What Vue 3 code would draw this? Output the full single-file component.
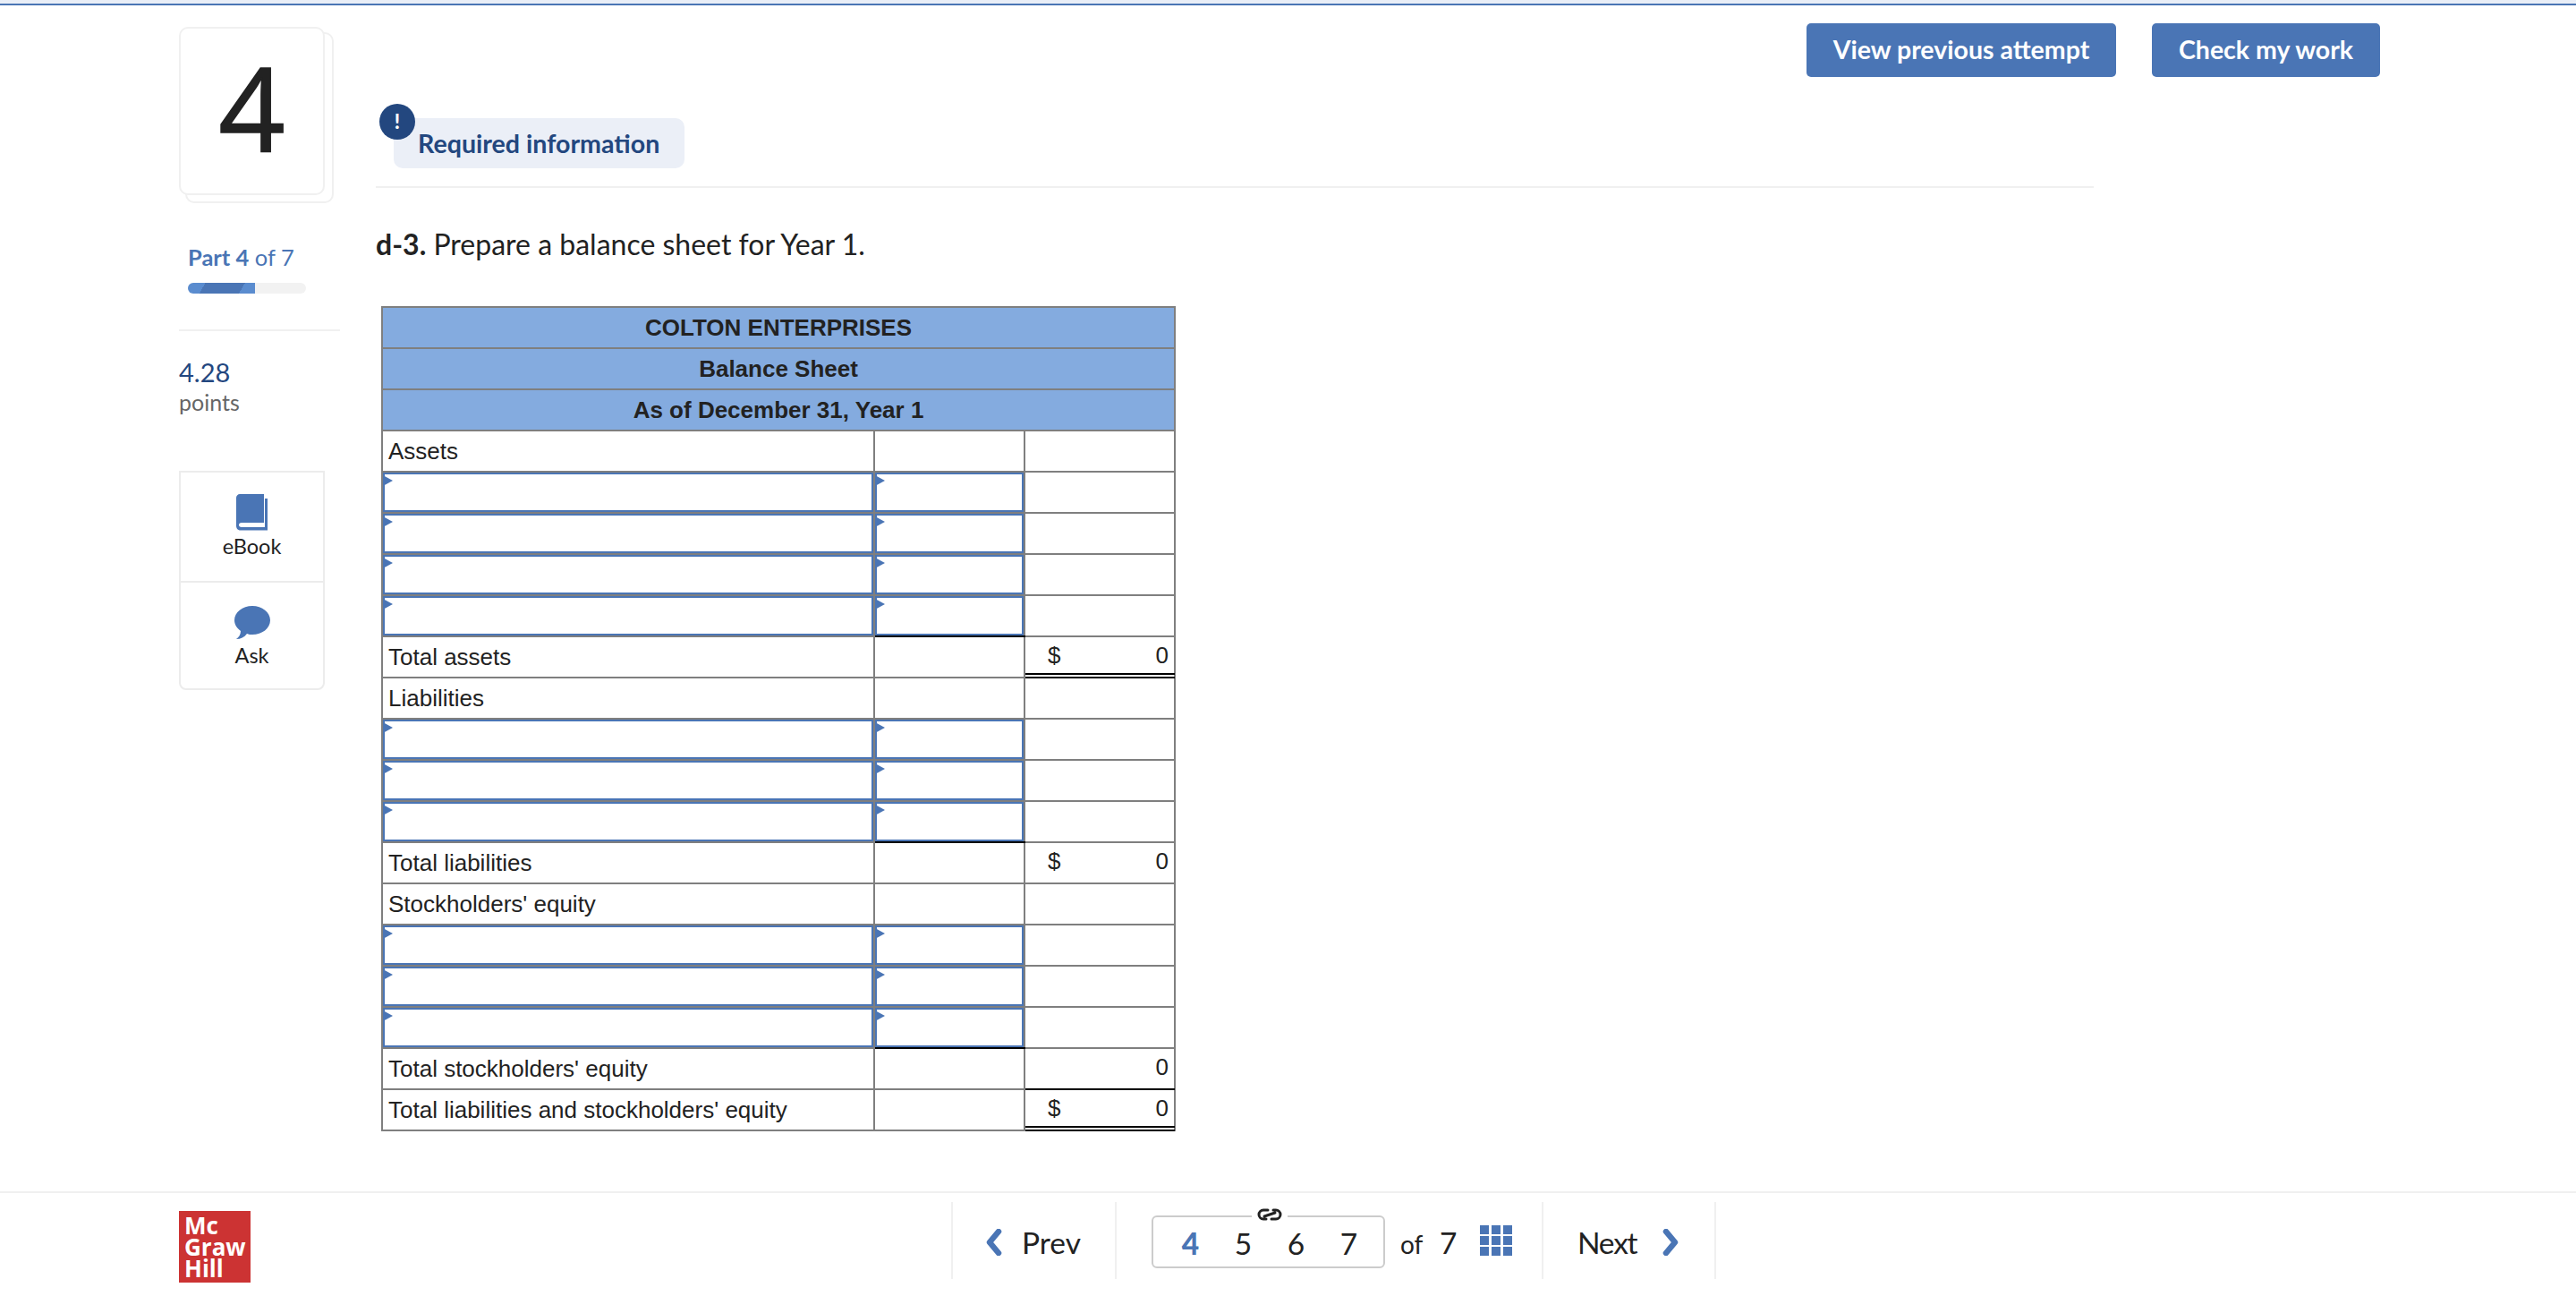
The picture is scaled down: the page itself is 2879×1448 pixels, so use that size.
<script setup>
const rows = [
  { label: 'Assets' },
  { input: true },
  { input: true },
  { input: true },
  { input: true, lastInput: true },
  { label: 'Total assets', dollar: true, value: 0, rule: 'double' },
  { label: 'Liabilities' },
  { input: true },
  { input: true },
  { input: true, lastInput: true },
  { label: 'Total liabilities', dollar: true, value: 0 },
  { label: "Stockholders' equity" },
  { input: true },
  { input: true },
  { input: true, lastInput: true },
  { label: "Total stockholders' equity", value: 0, rule: 'single' },
  { label: "Total liabilities and stockholders' equity", dollar: true, value: 0, rule: 'double' },
]
const pages = [4, 5, 6, 7]
</script>

<template>
  <div class="page">
    <div class="top-line"></div>
    <div class="main">
      <aside class="sidebar">
        <div class="number-card"><div class="number-front">4</div></div>
        <div class="part"><b>Part 4</b> of 7</div>
        <div class="progress"><div class="progress-fill"></div></div>
        <div class="points">
          <div class="points-value">4.28</div>
          <div class="points-label">points</div>
        </div>
        <div class="tools">
          <div class="tool">
            <svg width="36" height="41" viewBox="0 0 36 41">
              <path d="M4 0h27v32H6c-2 0-3 1-3 2.500S4 37 6 37h26V5h3v35.500H5c-3 0-5-2-5-5V4c0-2 2-4 4-4z" fill="#4a75b5" />
            </svg>
            <span>eBook</span>
          </div>
          <div class="tool">
            <svg width="40" height="38" viewBox="0 0 40 38">
              <path d="M20 0c11 0 20 7 20 16s-9 16-20 16c-2 0-4 0-6-1-3 4-7 6-12 6 3-2 5-5 5-9C3 25 0 21 0 16 0 7 9 0 20 0z" fill="#4a75b5" />
            </svg>
            <span>Ask</span>
          </div>
        </div>
      </aside>

      <section class="content">
        <div class="actions">
          <button class="action">View previous attempt</button>
          <button class="action action-check">Check my work</button>
        </div>
        <div class="required">
          <span class="badge">!</span>
          <span class="pill">Required information</span>
        </div>
        <p class="prompt"><b>d-3.</b> Prepare a balance sheet for Year 1.</p>
        <table class="sheet">
          <colgroup>
            <col class="col-label" />
            <col class="col-mid" />
            <col class="col-total" />
          </colgroup>
          <thead>
            <tr><th colspan="3">COLTON ENTERPRISES</th></tr>
            <tr><th colspan="3">Balance Sheet</th></tr>
            <tr><th colspan="3">As of December 31, Year 1</th></tr>
          </thead>
          <tbody>
            <tr v-for="(row, i) in rows" :key="i">
              <template v-if="row.input">
                <td class="cell-input"><div class="entry"></div></td>
                <td class="cell-input" :class="{ 'cell-sum': row.lastInput }"><div class="entry"></div></td>
                <td></td>
              </template>
              <template v-else>
                <td class="cell-label">{{ row.label }}</td>
                <td></td>
                <td class="cell-amount" :class="row.rule ? 'rule-' + row.rule : ''">
                  <div v-if="row.value !== undefined" class="amount">
                    <span>{{ row.dollar ? '$' : '' }}</span>
                    <span>{{ row.value }}</span>
                  </div>
                </td>
              </template>
            </tr>
          </tbody>
        </table>
      </section>
    </div>

    <footer class="footer">
      <div class="logo">Mc<br />Graw<br />Hill</div>
      <nav class="pager">
        <a class="pager-step pager-prev">
          <svg width="18" height="30" viewBox="0 0 18 30">
            <path d="M14 3L4 15l10 12" fill="none" stroke="#4a75b5" stroke-width="6.500" stroke-linecap="round" stroke-linejoin="round" />
          </svg>
          Prev
        </a>
        <div class="pager-middle">
          <div class="page-box">
            <svg class="link-icon" width="32" height="16" viewBox="0 0 32 16">
              <path d="M14 3H9a5 5 0 0 0 0 10h3M18 13h5a5 5 0 0 0 0-10h-3M10 10l12-4" fill="none" stroke="#222" stroke-width="3" stroke-linecap="round" />
            </svg>
            <span v-for="p in pages" :key="p" class="page-num" :class="{ current: p === 4 }">{{ p }}</span>
          </div>
          <span class="page-total"><small>of</small> 7</span>
          <div class="grid-icon"><i v-for="n in 9" :key="n"></i></div>
        </div>
        <a class="pager-step pager-next">
          <span class="next-label">Next</span>
          <svg width="18" height="30" viewBox="0 0 18 30">
            <path d="M4 3l10 12L4 27" fill="none" stroke="#4a75b5" stroke-width="6.500" stroke-linecap="round" stroke-linejoin="round" />
          </svg>
        </a>
      </nav>
    </footer>
  </div>
</template>

<style>
html, body {
  margin: 0;
  background: #fff;
}
</style>

<style scoped>
.page {
  width: 2879px;
  height: 1448px;
  overflow: hidden;
  display: flex;
  flex-direction: column;
  font-family: Lato, "Open Sans", sans-serif;
  color: #222;
}

.top-line {
  height: 2px;
  flex: none;
  background: #e9eef7;
  border-top: 2px solid #e9eef7;
  border-bottom: 2px solid #4a75b5;
}

.main {
  display: flex;
  flex: none;
  height: 1325px;
  padding-left: 200px;
  box-sizing: border-box;
}

.sidebar {
  width: 220px;
  flex: none;
  padding-top: 24px;
  box-sizing: border-box;
}

.number-card {
  width: 166px;
  height: 191px;
  box-sizing: border-box;
  border: 2px solid #f0f0f0;
  border-radius: 10px;
  position: relative;
  margin-left: 7px;
  margin-top: 6px;
}

.number-front {
  position: absolute;
  left: -9px;
  top: -8px;
  width: 163px;
  height: 188px;
  box-sizing: border-box;
  background: #fff;
  border: 2px solid #f0f0f0;
  border-radius: 10px;
  text-align: center;
  font-family: "Open Sans", sans-serif;
  font-size: 130px;
  font-weight: 400;
  line-height: 176px;
  color: #222;
  -webkit-text-stroke: 1.5px #222;
}

.part {
  margin: 45px 0 0 10px;
  font-size: 25.5px;
  line-height: 30px;
  color: #4a75b5;
}

.part b {
  font-weight: 700;
}

.progress {
  width: 132px;
  height: 12px;
  margin: 14px 0 0 10px;
  border-radius: 6px;
  background: #f2f2f2;
  overflow: hidden;
}

.progress-fill {
  width: 75px;
  height: 100%;
  background: linear-gradient(120deg, #5a8ccf 0 24%, #4a75b5 24% 78%, #5a8ccf 78%);
}

.points {
  width: 180px;
  margin-top: 40px;
  padding-top: 29px;
  border-top: 2px solid #f0f0f0;
}

.points-value {
  font-size: 29px;
  line-height: 34px;
  color: #23477f;
}

.points-label {
  font-size: 25px;
  line-height: 32px;
  color: #666;
}

.tools {
  width: 163px;
  height: 245px;
  margin-top: 61px;
  box-sizing: border-box;
  border: 2px solid #ececec;
  border-radius: 0 0 8px 8px;
}

.tool {
  height: 121px;
  box-sizing: border-box;
  padding-top: 24px;
  display: flex;
  flex-direction: column;
  align-items: center;
  font-size: 23.5px;
  line-height: 28px;
}

.tool + .tool {
  padding-top: 26px;
  border-top: 2px solid #ececec;
}

.tool svg {
  flex: none;
  margin-bottom: 3px;
}

.content {
  flex: 1;
  min-width: 0;
  padding: 20px 219px 0 0;
}

.actions {
  display: flex;
  justify-content: flex-end;
  gap: 40px;
  height: 60px;
}

.action {
  width: 346px;
  height: 60px;
  border: 0;
  border-radius: 5px;
  padding: 0 0 2px;
  background: #4a75b5;
  color: #fff;
  font-family: Lato, "Open Sans", sans-serif;
  font-size: 28.5px;
  font-weight: 700;
}

.action-check {
  width: 255px;
}

.required {
  position: relative;
  width: 1920px;
  height: 94px;
  margin-top: 30px;
  padding: 16px 0 0 20px;
  box-sizing: border-box;
  border-bottom: 2px solid #f0f0f0;
}

.badge {
  position: absolute;
  left: 4px;
  top: 0;
  width: 40px;
  height: 40px;
  border-radius: 50%;
  background: #23477f;
  color: #fff;
  font-size: 22px;
  font-weight: 900;
  line-height: 40px;
  text-align: center;
}

.pill {
  display: block;
  width: 325px;
  height: 56px;
  box-sizing: border-box;
  padding: 11px 0 0 27px;
  border-radius: 10px;
  background: #ebeff7;
  color: #23477f;
  font-size: 28.6px;
  font-weight: 700;
  line-height: 34px;
}

.prompt {
  margin: 44px 0 0;
  font-size: 32px;
  line-height: 38px;
}

.sheet {
  margin: 50px 0 0 6px;
  width: 886px;
  table-layout: fixed;
  border-collapse: collapse;
  font-family: "Liberation Sans", Arial, sans-serif;
  font-size: 26px;
  color: #222;
}

.col-label {
  width: 550px;
}

.col-mid {
  width: 168px;
}

.col-total {
  width: 168px;
}

.sheet th,
.sheet td {
  height: 44px;
  padding: 0;
  border: 2px solid #7f7f7f;
  box-sizing: content-box;
}

.sheet th {
  background: #84abdf;
  font-weight: 700;
  text-align: center;
  line-height: 30px;
}

.cell-label {
  padding-left: 6px !important;
  line-height: 30px;
}

.entry {
  position: relative;
  height: 44px;
  box-sizing: border-box;
  border: 2px solid #4a75b5;
}

.entry::before {
  content: '';
  position: absolute;
  left: -2px;
  top: 1px;
  border-left: 11px solid #4a75b5;
  border-top: 6.5px solid transparent;
  border-bottom: 6.5px solid transparent;
}

.sheet .cell-sum {
  border-bottom-color: #000;
}

.cell-amount {
  position: relative;
}

.amount {
  display: flex;
  justify-content: space-between;
  padding: 0 6px 5px 25px;
  line-height: 30px;
}

.rule-single::after,
.rule-double::after {
  content: '';
  position: absolute;
  left: 0;
  right: -1px;
  bottom: -2px;
  border-bottom: 2px solid #000;
}

.rule-double::after {
  height: 2px;
  border-top: 2px solid #000;
}

.footer {
  flex: 1;
  display: flex;
  position: relative;
  border-top: 2px solid #f0f0f0;
  box-sizing: border-box;
  padding-left: 200px;
}

.logo {
  width: 80px;
  height: 80px;
  margin-top: 20px;
  box-sizing: border-box;
  padding: 4px 0 0 6px;
  background: #cc3333;
  color: #fff;
  font-family: "Open Sans", sans-serif;
  font-size: 26px;
  font-weight: 700;
  line-height: 24px;
}

.pager {
  display: flex;
  height: 86px;
  margin: 10px 0 0 783px;
  color: #222;
  font-size: 33.5px;
  font-family: Lato, "Open Sans", sans-serif;
}

.pager-step {
  display: flex;
  align-items: center;
  box-sizing: border-box;
  height: 86px;
  padding-top: 4px;
  border-left: 2px solid #f0f0f0;
}

.pager-prev {
  width: 183px;
  padding-left: 37px;
  gap: 22px;
}

.pager-next {
  width: 195px;
  padding-left: 38px;
  gap: 29px;
  border-right: 2px solid #f0f0f0;
}

.next-label {
  letter-spacing: -1.2px;
}

.pager-middle {
  width: 477px;
  display: flex;
  align-items: center;
  border-left: 2px solid #f0f0f0;
  box-sizing: border-box;
  padding-left: 39px;
}

.page-box {
  position: relative;
  width: 261px;
  height: 59px;
  margin-top: 2px;
  box-sizing: border-box;
  border: 2px solid #ccc;
  border-radius: 6px;
  padding: 4px 0 0 12px;
  display: flex;
  align-items: center;
}

.link-icon {
  position: absolute;
  left: 110px;
  top: -11px;
  background: #fff;
  padding: 0 4px;
  width: 32px;
}

.page-num {
  width: 59px;
  text-align: center;
  line-height: 40px;
}

.page-num.current {
  color: #4a75b5;
  font-weight: 900;
}

.page-total {
  margin: 4px 0 0 17px;
  width: 89px;
}

.page-total small {
  font-size: 28px;
  margin-right: 10px;
}

.grid-icon {
  display: grid;
  grid-template-columns: repeat(3, 10px);
  grid-auto-rows: 10px;
  gap: 2px 3px;
  width: 36px;
}

.grid-icon i {
  background: #4a75b5;
}
</style>
